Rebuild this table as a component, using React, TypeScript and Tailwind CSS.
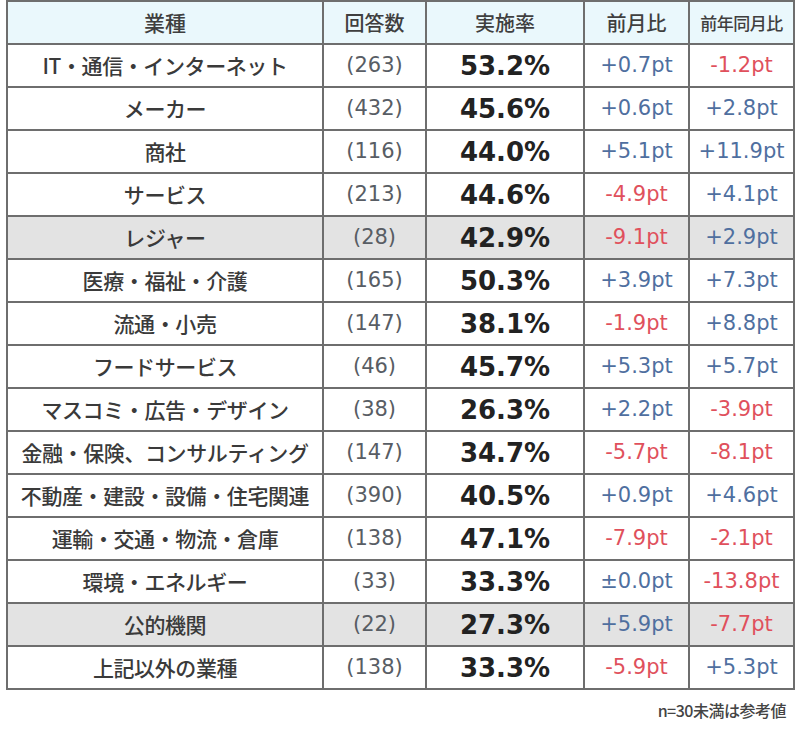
const rows = [
  { name: 'IT・通信・インターネット', n: 263, rate: '53.2%', mom: '+0.7pt', yoy: '-1.2pt' },
  { name: 'メーカー', n: 432, rate: '45.6%', mom: '+0.6pt', yoy: '+2.8pt' },
  { name: '商社', n: 116, rate: '44.0%', mom: '+5.1pt', yoy: '+11.9pt' },
  { name: 'サービス', n: 213, rate: '44.6%', mom: '-4.9pt', yoy: '+4.1pt' },
  { name: 'レジャー', n: 28, rate: '42.9%', mom: '-9.1pt', yoy: '+2.9pt' },
  { name: '医療・福祉・介護', n: 165, rate: '50.3%', mom: '+3.9pt', yoy: '+7.3pt' },
  { name: '流通・小売', n: 147, rate: '38.1%', mom: '-1.9pt', yoy: '+8.8pt' },
  { name: 'フードサービス', n: 46, rate: '45.7%', mom: '+5.3pt', yoy: '+5.7pt' },
  { name: 'マスコミ・広告・デザイン', n: 38, rate: '26.3%', mom: '+2.2pt', yoy: '-3.9pt' },
  { name: '金融・保険、コンサルティング', n: 147, rate: '34.7%', mom: '-5.7pt', yoy: '-8.1pt' },
  { name: '不動産・建設・設備・住宅関連', n: 390, rate: '40.5%', mom: '+0.9pt', yoy: '+4.6pt' },
  { name: '運輸・交通・物流・倉庫', n: 138, rate: '47.1%', mom: '-7.9pt', yoy: '-2.1pt' },
  { name: '環境・エネルギー', n: 33, rate: '33.3%', mom: '±0.0pt', yoy: '-13.8pt' },
  { name: '公的機関', n: 22, rate: '27.3%', mom: '+5.9pt', yoy: '-7.7pt' },
  { name: '上記以外の業種', n: 138, rate: '33.3%', mom: '-5.9pt', yoy: '+5.3pt' },
];

const jp = "font-['Noto_Sans_CJK_JP',sans-serif]";
const num = "font-['DejaVu_Sans','Noto_Sans_CJK_JP',sans-serif]";

function diffColor(v: string) {
  return v.startsWith('-') ? 'text-[#e0505c]' : 'text-[#4f6f9f]';
}

export default function App() {
  return (
    <div className="w-[800px] h-[732px] bg-white pl-[6px]">
      <table className="table-fixed border-collapse w-[787px]">
        <colgroup>
          <col className="w-[316px]" />
          <col className="w-[103px]" />
          <col className="w-[158px]" />
          <col className="w-[105px]" />
          <col className="w-[105px]" />
        </colgroup>
        <thead>
          <tr className="h-[43px] bg-[#eaf8fc] text-[#3f3f3f]">
            <th className={`border-2 border-[#6e6e6e] font-medium text-[21px] ${jp}`}>業種</th>
            <th className={`border-2 border-[#6e6e6e] font-medium text-[20px] ${jp}`}>回答数</th>
            <th className={`border-2 border-[#6e6e6e] font-medium text-[20px] ${jp}`}>実施率</th>
            <th className={`border-2 border-[#6e6e6e] font-medium text-[20px] ${jp}`}>前月比</th>
            <th className={`border-2 border-[#6e6e6e] font-medium text-[17px] tracking-[-0.5px] ${jp}`}>前年同月比</th>
          </tr>
        </thead>
        <tbody>
          {rows.map((r) => (
            <tr key={r.name} className={`h-[43px] ${r.n < 30 ? 'bg-[#e3e3e3]' : 'bg-white'}`}>
              <td className={`border-2 border-[#6e6e6e] text-center text-[21px] leading-none font-medium text-[#3a3a3a] whitespace-nowrap tracking-[-0.4px] ${jp}`}>
                {r.name}
              </td>
              <td className={`border-2 border-[#6e6e6e] text-center text-[21px] leading-none text-[#585d64] ${num}`}>
                ({r.n})
              </td>
              <td className={`border-2 border-[#6e6e6e] text-center text-[26px] leading-none font-bold text-[#222] ${num}`}>
                {r.rate}
              </td>
              <td className={`border-2 border-[#6e6e6e] text-center text-[21px] leading-none ${diffColor(r.mom)} ${num}`}>
                {r.mom}
              </td>
              <td className={`border-2 border-[#6e6e6e] text-center text-[21px] leading-none ${diffColor(r.yoy)} ${num}`}>
                {r.yoy}
              </td>
            </tr>
          ))}
        </tbody>
      </table>
      <div className={`flex justify-end pr-[14px] pt-[8px] text-[16px] font-medium text-[#444] tracking-[-0.5px] ${jp}`}>
        n=30未満は参考値
      </div>
    </div>
  );
}
